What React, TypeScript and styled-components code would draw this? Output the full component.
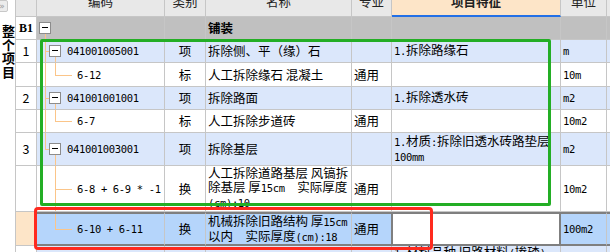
import styled, { createGlobalStyle, css } from 'styled-components';

const LINE = '#c6c6c6';
const DARK = '#7f7f7f';
const GUIDE = '#fbc589';
const COLUMNS = '21px 128px 41px 146px 40px 169px 46px 1fr';

const GlobalStyle = createGlobalStyle`
  html, body {
    margin: 0;
    padding: 0;
    background: #fff;
  }
  body {
    width: 610px;
    height: 252px;
    overflow: hidden;
    font-family: "Noto Sans CJK SC", "Noto Sans", sans-serif;
    font-size: 12.5px;
    color: #000;
  }
`;

const Page = styled.div`
  display: flex;
  width: 610px;
  height: 252px;
  overflow: hidden;
`;

const Sidebar = styled.aside`
  width: 15px;
  flex-shrink: 0;
  border-right: 1px solid ${LINE};
  display: flex;
  flex-direction: column;
  overflow: hidden;
`;

const CollapseButton = styled.div`
  width: 12px;
  height: 12px;
  margin-left: -4px;
  box-sizing: border-box;
  border: 1px solid #c8c8c8;
  border-radius: 2px;
  background: #ececec;
  color: #9a9a9a;
  font: 9px/10px "DejaVu Sans", sans-serif;
  text-align: center;
`;

const SideTitle = styled.div`
  margin: 13px 0 0 -6px;
  writing-mode: vertical-rl;
  font-weight: 700;
  font-size: 13px;
  line-height: 14px;
  letter-spacing: 0.5px;
`;

const Sheet = styled.div`
  flex: 1;
  min-width: 0;
  position: relative;
  display: flex;
  flex-direction: column;
`;

type Tone = 'head' | 'group' | 'parent' | 'child' | 'sel';

const toneBg: Record<Tone, string> = {
  head: '#e8e8e8',
  group: '#c0c0c0',
  parent: '#dbe7fb',
  child: '#fff',
  sel: '#b5d5fb',
};

const Row = styled.div<{ $h: number; $tone: Tone }>`
  display: grid;
  grid-template-columns: ${COLUMNS};
  height: ${(p) => p.$h}px;
  flex-shrink: 0;
  background: ${(p) => toneBg[p.$tone]};
  ${(p) =>
    p.$tone === 'sel' &&
    css`
      & > *:not(:first-child) {
        border-top: 2px solid ${DARK};
        border-bottom: 2px solid ${DARK};
      }
    `}
`;

const Cell = styled.div<{ $center?: boolean }>`
  box-sizing: border-box;
  min-width: 0;
  display: flex;
  align-items: center;
  justify-content: ${(p) => (p.$center ? 'center' : 'flex-start')};
  padding: 0 2px;
  border-right: 1px solid ${LINE};
  border-bottom: 1px solid ${LINE};
  overflow: hidden;
`;

const Text = styled.div<{ $bold?: boolean }>`
  white-space: pre;
  line-height: 13.5px;
  font-weight: ${(p) => (p.$bold ? 700 : 400)};
`;

const Mono = styled.span`
  font-family: "DejaVu Sans Mono", "Liberation Mono", monospace;
  font-size: 10.5px;
  letter-spacing: -0.35px;
`;

const HeadCell = styled(Cell)`
  align-items: flex-end;
  justify-content: center;
  padding-bottom: 5px;
  color: #222;
`;

const FeatureHead = styled(HeadCell)`
  background: #fde5c8;
  border-bottom: 2px solid #2370e6;
  padding-bottom: 4px;
  font-weight: 700;
`;

const NumCell = styled(Cell)<{ $tone: Tone }>`
  justify-content: center;
  background: ${(p) => (p.$tone === 'head' ? '#e8e8e8' : p.$tone === 'sel' ? '#fde5c8' : '#fff')};
`;

const GroupNo = styled.span`
  font-family: "Liberation Serif", serif;
  font-weight: 700;
  font-size: 12px;
`;

const CodeCell = styled(Cell)<{ $indent: number }>`
  position: relative;
  padding-left: ${(p) => p.$indent}px;
  gap: 6px;
`;

const EditCell = styled(Cell)`
  margin-left: -1px;
  border-left: 2px solid ${DARK};
  border-right: 2px solid ${DARK};
  background: #fff;
`;

const Expander = styled.span`
  position: relative;
  z-index: 1;
  flex-shrink: 0;
  width: 12px;
  height: 12px;
  box-sizing: border-box;
  border: 1px solid #8c8c8c;
  background: #fff;

  &::after {
    content: '';
    position: absolute;
    left: 2px;
    right: 2px;
    top: 4px;
    height: 1px;
    background: #000;
  }
`;

const Stem = styled.span<{ $x: number; $top: string; $bottom: string }>`
  position: absolute;
  left: ${(p) => p.$x}px;
  top: ${(p) => p.$top};
  bottom: ${(p) => p.$bottom};
  width: 1px;
  background: ${GUIDE};
`;

const Elbow = styled.span<{ $x: number; $w: number }>`
  position: absolute;
  left: ${(p) => p.$x}px;
  width: ${(p) => p.$w}px;
  top: 50%;
  height: 1px;
  background: ${GUIDE};
`;

const Mark = styled.div<{ $x: number; $y: number; $w: number; $h: number; $color: string; $r: number }>`
  position: absolute;
  left: ${(p) => p.$x}px;
  top: ${(p) => p.$y}px;
  width: ${(p) => p.$w}px;
  height: ${(p) => p.$h}px;
  box-sizing: border-box;
  border: 3px solid ${(p) => p.$color};
  border-radius: ${(p) => p.$r}px;
  pointer-events: none;
`;

type Span = 'full' | 'top' | 'down';

const spans: Record<Span, [string, string]> = {
  full: ['0', '-1px'],
  top: ['0', '50%'],
  down: ['calc(50% + 6px)', '-1px'],
};

interface Item {
  no?: string;
  tone: Tone;
  h: number;
  code: string;
  type: string;
  name: string;
  spec?: string;
  feature?: string;
  unit: string;
  trunk?: Span;
  branch?: Span;
}

const items: Item[] = [
  { no: '1', tone: 'parent', h: 23, code: '041001005001', type: '项', name: '拆除侧、平（缘）石', feature: '1.拆除路缘石', unit: 'm', trunk: 'full', branch: 'down' },
  { tone: 'child', h: 24, code: '6-12', type: '标', name: '人工拆除缘石 混凝土', spec: '通用', unit: '10m', trunk: 'full', branch: 'top' },
  { no: '2', tone: 'parent', h: 23, code: '041001001001', type: '项', name: '拆除路面', feature: '1.拆除透水砖', unit: 'm2', trunk: 'full', branch: 'down' },
  { tone: 'child', h: 23, code: '6-7', type: '标', name: '人工拆除步道砖', spec: '通用', unit: '10m2', trunk: 'full', branch: 'top' },
  { no: '3', tone: 'parent', h: 33, code: '041001003001', type: '项', name: '拆除基层', feature: '1.材质:拆除旧透水砖路垫层\n100mm', unit: 'm2', trunk: 'top', branch: 'down' },
  { tone: 'child', h: 46, code: '6-8 + 6-9 * -1', type: '换', name: '人工拆除道路基层 风镐拆\n除基层 厚15cm　实际厚度\n(cm):10', spec: '通用', unit: '10m2', branch: 'full' },
  { tone: 'sel', h: 34, code: '6-10 + 6-11', type: '换', name: '机械拆除旧路结构 厚15cm\n以内　实际厚度(cm):18', spec: '通用', unit: '100m2', branch: 'top' },
  { no: '4', tone: 'parent', h: 60, code: '041001002001', type: '项', name: '拆除旧路', feature: '1.材料品种 旧路材料(掺碴)\n2.厚度:20cm\n3.运距:自行考虑\n4.其他', unit: 'm2' },
];

function Rich({ text }: { text: string }) {
  const parts = text.split(/([\x20-\x7e]+)/);
  return (
    <Text>
      {parts.map((part, i) =>
        /^[\x20-\x7e]+$/.test(part) && /[^ ]/.test(part) ? <Mono key={i}>{part}</Mono> : part
      )}
    </Text>
  );
}

function CodeColumn({ item }: { item: Item }) {
  const parent = item.tone === 'parent';
  return (
    <CodeCell $indent={parent ? 12 : 40}>
      {item.trunk && <Stem $x={8} $top={spans[item.trunk][0]} $bottom={spans[item.trunk][1]} />}
      {item.branch && <Stem $x={18} $top={spans[item.branch][0]} $bottom={spans[item.branch][1]} />}
      {parent && item.trunk && <Elbow $x={8} $w={4} />}
      {!parent && <Elbow $x={18} $w={17} />}
      {parent && <Expander />}
      <Rich text={item.code} />
    </CodeCell>
  );
}

export default function App() {
  return (
    <Page>
      <GlobalStyle />
      <Sidebar>
        <CollapseButton>»</CollapseButton>
        <SideTitle>整个项目</SideTitle>
      </Sidebar>
      <Sheet>
        <Row $h={17} $tone="head">
          <NumCell $tone="head" />
          <HeadCell>编码</HeadCell>
          <HeadCell>类别</HeadCell>
          <HeadCell>名称</HeadCell>
          <HeadCell>专业</HeadCell>
          <FeatureHead>项目特征</FeatureHead>
          <HeadCell>单位</HeadCell>
          <HeadCell />
        </Row>
        <Row $h={23} $tone="group">
          <NumCell $tone="group">
            <GroupNo>B1</GroupNo>
          </NumCell>
          <CodeCell $indent={2}>
            <Stem $x={8} $top={spans.down[0]} $bottom={spans.down[1]} />
            <Expander />
          </CodeCell>
          <Cell />
          <Cell>
            <Text $bold>铺装</Text>
          </Cell>
          <Cell />
          <Cell />
          <Cell />
          <Cell />
        </Row>
        {items.map((item, i) => (
          <Row key={i} $h={item.h} $tone={item.tone}>
            <NumCell $tone={item.tone}>{item.no && <Text>{item.no}</Text>}</NumCell>
            <CodeColumn item={item} />
            <Cell $center>
              <Text>{item.type}</Text>
            </Cell>
            <Cell>
              <Rich text={item.name} />
            </Cell>
            <Cell>{item.spec && <Text>{item.spec}</Text>}</Cell>
            {item.tone === 'sel' ? (
              <EditCell />
            ) : (
              <Cell>{item.feature && <Rich text={item.feature} />}</Cell>
            )}
            <Cell>
              <Rich text={item.unit} />
            </Cell>
            <Cell />
          </Row>
        ))}
        <Mark $x={24} $y={39} $w={511} $h={167} $color="#23ae25" $r={2} />
        <Mark $x={18} $y={207} $w={399} $h={43} $color="#ff2a1e" $r={4} />
      </Sheet>
    </Page>
  );
}
